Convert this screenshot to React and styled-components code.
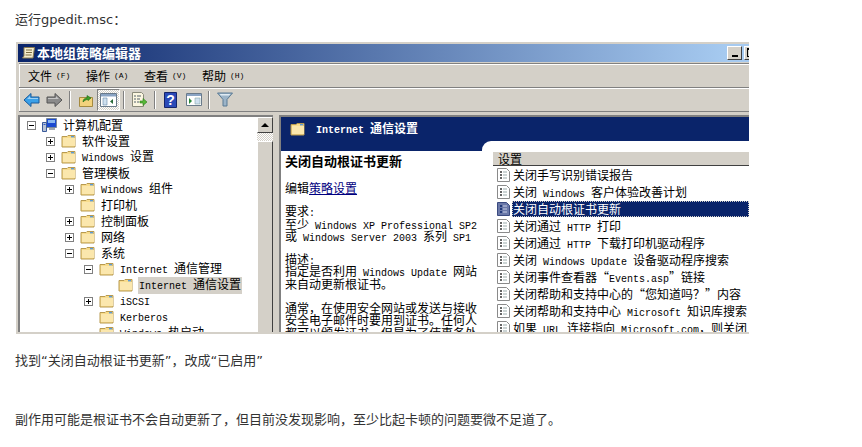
import React from 'react';
import styled, { createGlobalStyle } from 'styled-components';

const GlobalStyle = createGlobalStyle`
  html, body {
    margin: 0;
    padding: 0;
    background: #fff;
  }
`;

const UI_FONT = `"Noto Sans CJK SC", "Liberation Sans", sans-serif`;

const Page = styled.div`
  width: 862px;
  height: 447px;
  overflow: hidden;
  padding: 11px 0 0 15px;
  box-sizing: border-box;
  color: #333;
  font-family: "DejaVu Sans", "Noto Sans CJK SC", sans-serif;
  font-size: 13px;
  line-height: 18px;
`;

const Para = styled.p`
  margin: ${(p) => p.$top || 0}px 0 0;
  white-space: nowrap;
`;

const Shot = styled.div`
  width: 731px;
  height: 288px;
  margin: 13px 0 0 1px;
  border: solid #d4d0c8;
  border-width: 2px 0 2px 2px;
  background: #d4d0c8;
  overflow: hidden;
  font-family: ${UI_FONT};
  font-size: 12px;
  line-height: 14px;
  color: #000;
`;

const TitleBar = styled.div`
  display: flex;
  align-items: center;
  height: 18px;
  padding-left: 3px;
  background: linear-gradient(90deg, #0a246a 0%, #a6caf0 97%);
  color: #fff;
  font-weight: 700;
  font-size: 13px;
`;

const TitleText = styled.span`
  margin-left: 1px;
`;

const WinButtons = styled.div`
  display: flex;
  gap: 2px;
  margin-left: auto;
  margin-right: -10px;
`;

const WinButton = styled.div`
  display: flex;
  justify-content: center;
  width: 15px;
  height: 14px;
  box-sizing: border-box;
  background: #d4d0c8;
  border: 1px solid;
  border-color: #fff #404040 #404040 #fff;
`;

const MinGlyph = styled.i`
  width: 6px;
  height: 2px;
  margin-top: 8px;
  background: #000;
`;

const MaxGlyph = styled.i`
  width: 9px;
  height: 9px;
  margin-top: 1px;
  box-sizing: border-box;
  border: 1px solid #000;
  border-top-width: 2px;
`;

const Bar = styled.div`
  display: flex;
  align-items: center;
  margin-left: 1px;
  box-sizing: border-box;
  border-top: 1px solid #808080;
  box-shadow: inset 0 1px 0 #fff, inset 1px 0 0 #fff;
`;

const MenuBar = styled(Bar)`
  height: 24px;
  margin-top: 1px;
  padding-left: 9px;
`;

const MenuItem = styled.span`
  display: flex;
  align-items: center;
  gap: 4px;
  width: 58px;
  flex: none;
  white-space: nowrap;
`;

const MenuKey = styled.span`
  font-family: "Liberation Mono", monospace;
  font-size: 8px;
`;

const ToolBar = styled(Bar)`
  height: 25px;
  padding-left: 1px;
  border-bottom: 1px solid #808080;
`;

const ToolButton = styled.div`
  display: flex;
  align-items: center;
  justify-content: center;
  width: 23px;
  height: 22px;
  box-sizing: border-box;
  ${(p) => p.$active && `
    border: 1px solid;
    border-color: #808080 #fff #fff #808080;
    background: repeating-conic-gradient(#fff 0 25%, #d4d0c8 0 50%) 0 0 / 2px 2px;
  `}
`;

const ToolSep = styled.div`
  width: 2px;
  height: 18px;
  margin: 0 3px;
  background: linear-gradient(90deg, #808080 50%, #fff 50%);
`;

const Panes = styled.div`
  display: flex;
  gap: 6px;
  height: 222px;
  margin-top: 3px;
`;

const TreePane = styled.div`
  display: flex;
  width: 255px;
  box-sizing: border-box;
  border: solid;
  border-width: 2px 0 0 2px;
  border-color: #808080;
  background: #fff;
`;

const TreeList = styled.div`
  flex: 1;
  min-width: 0;
`;

const TreeRow = styled.div`
  display: flex;
  align-items: center;
  height: 16px;
  padding-left: ${(p) => 7 + p.$level * 19}px;
  white-space: nowrap;
`;

const ExpanderSlot = styled.div`
  display: flex;
  align-items: center;
  justify-content: center;
  width: 9px;
  height: 9px;
  margin-right: 6px;
  flex: none;
  box-sizing: border-box;
  ${(p) => p.$box && `border: 1px solid #808080;`}
`;

const TreeLabel = styled.span`
  margin-left: 5px;
  padding: 0 1px;
  ${(p) => p.$selected && `background: #d4d0c8;`}
`;

const ScrollBar = styled.div`
  display: flex;
  flex-direction: column;
  width: 16px;
  flex: none;
`;

const ScrollUp = styled.div`
  display: flex;
  align-items: center;
  justify-content: center;
  height: 16px;
  box-sizing: border-box;
  background: #d4d0c8;
  border: 1px solid;
  border-color: #fff #404040 #404040 #fff;
`;

const ScrollArrow = styled.i`
  width: 0;
  height: 0;
  border: solid transparent;
  border-width: 0 4px 4px;
  border-bottom-color: #000;
`;

const ScrollTrack = styled.div`
  height: 8px;
  background: repeating-conic-gradient(#fff 0 25%, #d4d0c8 0 50%) 0 0 / 2px 2px;
`;

const ScrollThumb = styled.div`
  flex: 1;
  background: #d4d0c8;
  border: 1px solid;
  border-color: #fff #404040 #404040 #fff;
`;

const DetailPane = styled.div`
  flex: 1;
  min-width: 0;
  display: flex;
  flex-direction: column;
  box-sizing: border-box;
  border: solid #808080;
  border-width: 2px 0 0 2px;
  background: #0a246a;
`;

const Banner = styled.div`
  display: flex;
  align-items: center;
  gap: 11px;
  height: 24px;
  padding-left: 9px;
  color: #fff;
  font-weight: 700;
  flex: none;
`;

const DetailBody = styled.div`
  flex: 1;
  display: flex;
  min-height: 0;
`;

const Description = styled.div`
  width: 201px;
  flex: none;
  margin-top: 10px;
  padding: 2px 0 0 4px;
  box-sizing: border-box;
  background: #fff;
  white-space: nowrap;
`;

const DescHeading = styled.div`
  font-size: 13px;
  font-weight: 700;
  line-height: 16px;
`;

const DescEdit = styled.div`
  margin-top: 12px;
  line-height: 14px;
`;

const DescLink = styled.span`
  color: #000080;
  text-decoration: underline;
`;

const DescBlock = styled.div`
  margin-top: ${(p) => p.$top}px;
`;

const DescLine = styled.div`
  height: 12.6px;
  line-height: 12.6px;
`;

const Settings = styled.div`
  flex: 1;
  min-width: 0;
  padding: 11px 0 0 11px;
  background: #fff;
  border-top-left-radius: 9px;
  white-space: nowrap;
`;

const SettingsHeader = styled.div`
  display: flex;
  align-items: flex-end;
  height: 13px;
  padding-left: 5px;
  background: #d4d0c8;
  border-bottom: 1px solid #404040;
  line-height: 13px;
`;

const SettingRow = styled.div`
  display: flex;
  align-items: center;
  height: 17px;
  padding-left: 4px;
`;

const SettingLabel = styled.span`
  flex: 1;
  margin-left: 2px;
  padding-left: 1px;
  height: 16px;
  line-height: 16px;
  ${(p) => p.$selected && `
    background: #0a246a;
    color: #fff;
    outline: 1px dotted #d4d0c8;
    outline-offset: -1px;
  `}
`;

const Lat = styled.span`
  font-family: "Liberation Mono", monospace;
  font-size: 10px;
`;

// SimSun latin is half width, so latin runs get the 6px mono
const Mixed = ({ text }) =>
  text.split(/([\x20-\x7e]+)/).map((part, i) =>
    /^[\x20-\x7e]+$/.test(part) ? <Lat key={i}>{part}</Lat> : part
  );

const Folder = () => (
  <svg width="15" height="14" viewBox="0 0 15 14">
    <path d="M1 2.5h5l1-1h7v11.5H1z" fill="#f8dc8c" stroke="#b89a50" />
    <path d="M2 4h12v8H2z" fill="#fbe7ad" />
    <path d="M10 2h3v1.4h-3z" fill="#5a9ad8" />
  </svg>
);

const ListDoc = ({ selected }) => (
  <svg width="13" height="14" viewBox="0 0 13 14">
    <path d="M.5.5h9l3 3v10H.5z" fill={selected ? '#6a78a8' : '#fff'} stroke={selected ? '#3a4a80' : '#8a8a8a'} />
    <path d="M3 4h2M3 7h2M3 10h2" stroke={selected ? '#0a246a' : '#333'} strokeWidth="1.4" />
    <path d="M6 4h4M6 7h4M6 10h4" stroke={selected ? '#c8d0e8' : '#9aa'} />
  </svg>
);

const ComputerIcon = () => (
  <svg width="15" height="16" viewBox="0 0 15 16">
    <path d="M4.5 1.5h10v9h-10z" fill="#1a4ad0" stroke="#7a8a9a" />
    <path d="M6 3h7v3H6z" fill="#8ab8f0" />
    <path d="M7 11h6v2H7z" fill="#a0a8b0" />
    <path d="M.5 5.5h4v9h-4z" fill="#b8c4d4" stroke="#3a5a9a" />
    <path d="M1.5 7h2v1h-2z" fill="#2a5ad0" />
  </svg>
);

const Plus = () => (
  <svg width="7" height="7" viewBox="0 0 7 7">
    <path d="M1 3.5h5M3.5 1v5" stroke="#000" />
  </svg>
);

const Minus = () => (
  <svg width="7" height="7" viewBox="0 0 7 7">
    <path d="M1 3.5h5" stroke="#000" />
  </svg>
);

const ArrowIcon = ({ dir, fill, stroke }) => (
  <svg width="17" height="16" viewBox="0 0 17 16">
    <path
      d={dir === 'left' ? 'M1 8l7-6.5V5h8v6H8v3.5z' : 'M16 8L9 1.5V5H1v6h8v3.5z'}
      fill={fill}
      stroke={stroke}
    />
    <path d={dir === 'left' ? 'M4 7l3-3v2h8v1z' : 'M2 6h8V4l3 3H2z'} fill="#fff" opacity=".5" />
  </svg>
);

const UpFolderIcon = () => (
  <svg width="16" height="16" viewBox="0 0 16 16">
    <path d="M1.5 5.5h13v9h-13z" fill="#f3d27c" stroke="#a58a40" />
    <path d="M5 10c0-3 2-4 4-4V3.5L13 6l-3 2.6V7.5C8 7.5 6.5 8.5 5 10z" fill="#3aa028" stroke="#1f6a16" strokeWidth=".6" />
  </svg>
);

const PaneIcon = () => (
  <svg width="17" height="14" viewBox="0 0 17 14">
    <path d="M.5.5h16v13H.5z" fill="#fff" stroke="#6a7a8a" />
    <path d="M1 1h15v2.5H1z" fill="#8aa4c4" />
    <path d="M3 5h4v7H3z" fill="#cfe0ef" stroke="#6a8aaa" strokeWidth=".6" />
    <path d="M13 6v5l-3-2.5z" fill="#2a6a3a" />
  </svg>
);

const ExportIcon = () => (
  <svg width="17" height="16" viewBox="0 0 17 16">
    <path d="M1.5.5h9l2 2v12h-11z" fill="#fbf6e0" stroke="#8a8a7a" />
    <path d="M3 4h2M3 7h2M3 10h2M6 4h4M6 7h3M6 10h2" stroke="#55606a" />
    <path d="M9 9h3V6.5l4 3.5-4 3.5V11H9z" fill="#58b838" stroke="#2a7a1a" strokeWidth=".6" />
  </svg>
);

const HelpIcon = () => (
  <svg width="13" height="16" viewBox="0 0 13 16">
    <path d="M.5.5h12v15H.5z" fill="#2a4ab8" stroke="#14246a" />
    <text x="6.5" y="13" textAnchor="middle" fontSize="14" fontWeight="700" fill="#fff" fontFamily="Liberation Sans">?</text>
  </svg>
);

const ActionPaneIcon = () => (
  <svg width="16" height="13" viewBox="0 0 16 13">
    <path d="M.5.5h15v12H.5z" fill="#fff" stroke="#6a7a8a" />
    <path d="M1 1h14v2H1z" fill="#8aa4c4" />
    <path d="M3 5v6l3-3z" fill="#2a8a3a" />
    <path d="M9 5h5v6H9z" fill="#cfe0ef" stroke="#8aa" strokeWidth=".6" />
  </svg>
);

const FilterIcon = () => (
  <svg width="16" height="15" viewBox="0 0 16 15">
    <path d="M.5 1h15L10 7.5v6.5H6V7.5z" fill="#9cb4c8" stroke="#5a7a94" />
    <path d="M2.5 2h11l-1.5 1.6H4z" fill="#e0ebf3" />
  </svg>
);

const tree = [
  { level: 0, open: true, icon: 'computer', label: '计算机配置' },
  { level: 1, closed: true, label: '软件设置' },
  { level: 1, closed: true, label: 'Windows 设置' },
  { level: 1, open: true, label: '管理模板' },
  { level: 2, closed: true, label: 'Windows 组件' },
  { level: 2, label: '打印机' },
  { level: 2, closed: true, label: '控制面板' },
  { level: 2, closed: true, label: '网络' },
  { level: 2, open: true, label: '系统' },
  { level: 3, open: true, label: 'Internet 通信管理' },
  { level: 4, selected: true, label: 'Internet 通信设置' },
  { level: 3, closed: true, label: 'iSCSI' },
  { level: 3, label: 'Kerberos' },
  { level: 3, label: 'Windows 热启动' },
];

const settings = [
  '关闭手写识别错误报告',
  '关闭 Windows 客户体验改善计划',
  '关闭自动根证书更新',
  '关闭通过 HTTP 打印',
  '关闭通过 HTTP 下载打印机驱动程序',
  '关闭 Windows Update 设备驱动程序搜索',
  '关闭事件查看器“Events.asp”链接',
  '关闭帮助和支持中心的“您知道吗？”内容',
  '关闭帮助和支持中心 Microsoft 知识库搜索',
  '如果 URL 连接指向 Microsoft.com，则关闭',
];

const menus = [
  ['文件', '(F)'],
  ['操作', '(A)'],
  ['查看', '(V)'],
  ['帮助', '(H)'],
];

const descBlocks = [
  { top: 10, lines: ['要求:', '至少 Windows XP Professional SP2', '或 Windows Server 2003 系列 SP1'] },
  { top: 10, lines: ['描述:', '指定是否利用 Windows Update 网站', '来自动更新根证书。'] },
  { top: 11, lines: ['通常，在使用安全网站或发送与接收', '安全电子邮件时要用到证书。任何人', '都可以颁发证书，但是为了使事务处'] },
];

export default function App() {
  return (
    <Page>
      <GlobalStyle />
      <Para>运行gpedit.msc：</Para>
      <Shot>
        <TitleBar>
          <svg width="15" height="15" viewBox="0 0 15 15">
            <path d="M3 1.5h10.5L12 12H1.5L3 10z" fill="#f4eccc" stroke="#8a7a50" />
            <path d="M5 4h6M5 6.5h6M4.5 9h6" stroke="#7a6a40" />
          </svg>
          <TitleText>本地组策略编辑器</TitleText>
          <WinButtons>
            <WinButton><MinGlyph /></WinButton>
            <WinButton><MaxGlyph /></WinButton>
          </WinButtons>
        </TitleBar>
        <MenuBar>
          {menus.map(([name, key]) => (
            <MenuItem key={name}>
              {name}
              <MenuKey>{key}</MenuKey>
            </MenuItem>
          ))}
        </MenuBar>
        <ToolBar>
          <ToolButton><ArrowIcon dir="left" fill="#3aa0e8" stroke="#1a5a9a" /></ToolButton>
          <ToolButton><ArrowIcon dir="right" fill="#8a8a8a" stroke="#555" /></ToolButton>
          <ToolSep />
          <ToolButton><UpFolderIcon /></ToolButton>
          <ToolButton $active><PaneIcon /></ToolButton>
          <ToolSep />
          <ToolButton><ExportIcon /></ToolButton>
          <ToolSep />
          <ToolButton><HelpIcon /></ToolButton>
          <ToolButton><ActionPaneIcon /></ToolButton>
          <ToolSep />
          <ToolButton><FilterIcon /></ToolButton>
        </ToolBar>
        <Panes>
          <TreePane>
            <TreeList>
              {tree.map((row) => (
                <TreeRow key={row.label} $level={row.level}>
                  <ExpanderSlot $box={row.open || row.closed}>
                    {row.open && <Minus />}
                    {row.closed && <Plus />}
                  </ExpanderSlot>
                  {row.icon === 'computer' ? <ComputerIcon /> : <Folder />}
                  <TreeLabel $selected={row.selected}>
                    <Mixed text={row.label} />
                  </TreeLabel>
                </TreeRow>
              ))}
            </TreeList>
            <ScrollBar>
              <ScrollUp><ScrollArrow /></ScrollUp>
              <ScrollTrack />
              <ScrollThumb />
            </ScrollBar>
          </TreePane>
          <DetailPane>
            <Banner>
              <Folder />
              <span><Mixed text="Internet 通信设置" /></span>
            </Banner>
            <DetailBody>
              <Description>
                <DescHeading>关闭自动根证书更新</DescHeading>
                <DescEdit>编辑<DescLink>策略设置</DescLink></DescEdit>
                {descBlocks.map((block) => (
                  <DescBlock key={block.lines[0]} $top={block.top}>
                    {block.lines.map((line) => (
                      <DescLine key={line}><Mixed text={line} /></DescLine>
                    ))}
                  </DescBlock>
                ))}
              </Description>
              <Settings>
                <SettingsHeader>设置</SettingsHeader>
                {settings.map((text, i) => (
                  <SettingRow key={text}>
                    <ListDoc selected={i === 2} />
                    <SettingLabel $selected={i === 2}>
                      <Mixed text={text} />
                    </SettingLabel>
                  </SettingRow>
                ))}
              </Settings>
            </DetailBody>
          </DetailPane>
        </Panes>
      </Shot>
      <Para $top={18}>找到“关闭自动根证书更新”，改成“已启用”</Para>
      <Para $top={41}>副作用可能是根证书不会自动更新了，但目前没发现影响，至少比起卡顿的问题要微不足道了。</Para>
    </Page>
  );
}
